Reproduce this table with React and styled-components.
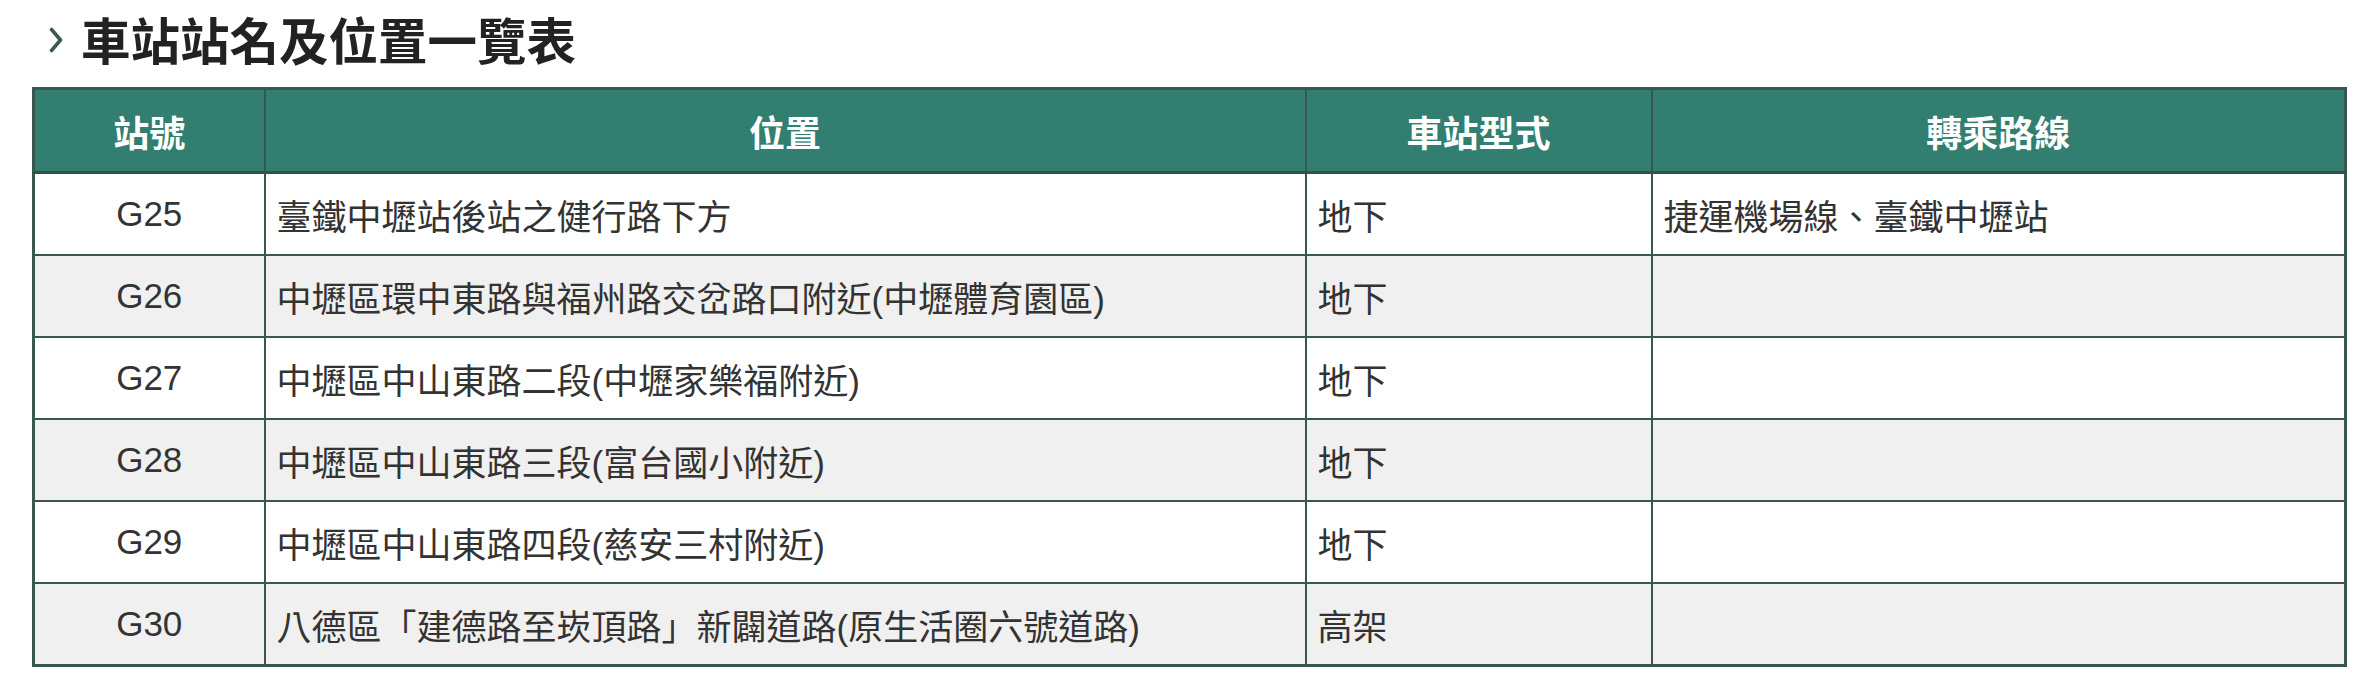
import React from "react";
import styled, { createGlobalStyle } from "styled-components";

const GlobalStyle = createGlobalStyle`
  body {
    margin: 0;
    background: #fff;
    font-family: "Liberation Sans", "Noto Sans CJK TC", sans-serif;
    color: #333;
  }
`;

const Page = styled.div`
  padding: 0 20px 0 32px;
`;

const TitleRow = styled.div`
  display: flex;
  align-items: center;
  gap: 18px;
  height: 87px;
  padding-left: 17px;
  padding-bottom: 8px;
  box-sizing: border-box;
`;

const Title = styled.h2`
  margin: 0;
  font-family: "Noto Sans CJK TC", sans-serif;
  font-weight: 700;
  font-size: 49.5px;
  line-height: 1.3;
  color: #222;
`;

const Table = styled.table`
  width: 2314px;
  border-collapse: collapse;
  table-layout: fixed;
  border: 3px solid #3a574e;
`;

const HeadCell = styled.th`
  height: 81px;
  background: #327f72;
  color: #fff;
  font-family: "Noto Sans CJK TC", sans-serif;
  font-weight: 700;
  font-size: 36px;
  text-align: center;
  border: 2px solid #3a574e;
  border-bottom: 3px solid #2f5249;
  padding: 0;
`;

const Row = styled.tr`
  background: ${(p) => (p.$alt ? "#f0f0f0" : "#fff")};
`;

const Cell = styled.td`
  height: 80px;
  border: 2px solid #3a574e;
  font-size: 35px;
  color: #333;
  padding: 0 11px;
  text-align: ${(p) => (p.$center ? "center" : "left")};
  white-space: nowrap;
`;

const Chevron = () => (
  <svg width="14" height="26" viewBox="0 0 14 26">
    <path d="M2.5 2.5 L11.5 13 L2.5 23.5" fill="none" stroke="#3d5a50" strokeWidth="3.6" strokeLinecap="round" strokeLinejoin="round" />
  </svg>
);

const rows = [
  ["G25", "臺鐵中壢站後站之健行路下方", "地下", "捷運機場線、臺鐵中壢站"],
  ["G26", "中壢區環中東路與福州路交岔路口附近(中壢體育園區)", "地下", ""],
  ["G27", "中壢區中山東路二段(中壢家樂福附近)", "地下", ""],
  ["G28", "中壢區中山東路三段(富台國小附近)", "地下", ""],
  ["G29", "中壢區中山東路四段(慈安三村附近)", "地下", ""],
  ["G30", "八德區「建德路至崁頂路」新闢道路(原生活圈六號道路)", "高架", ""],
];

export default function App() {
  return (
    <>
      <GlobalStyle />
      <Page>
        <TitleRow>
          <Chevron />
          <Title>車站站名及位置一覽表</Title>
        </TitleRow>
        <Table>
          <colgroup>
            <col style={{ width: "231px" }} />
            <col style={{ width: "1041px" }} />
            <col style={{ width: "346px" }} />
            <col style={{ width: "694px" }} />
          </colgroup>
          <thead>
            <tr>
              <HeadCell>站號</HeadCell>
              <HeadCell>位置</HeadCell>
              <HeadCell>車站型式</HeadCell>
              <HeadCell>轉乘路線</HeadCell>
            </tr>
          </thead>
          <tbody>
            {rows.map((r, i) => (
              <Row key={r[0]} $alt={i % 2 === 1}>
                <Cell $center>{r[0]}</Cell>
                <Cell>{r[1]}</Cell>
                <Cell>{r[2]}</Cell>
                <Cell>{r[3]}</Cell>
              </Row>
            ))}
          </tbody>
        </Table>
      </Page>
    </>
  );
}
